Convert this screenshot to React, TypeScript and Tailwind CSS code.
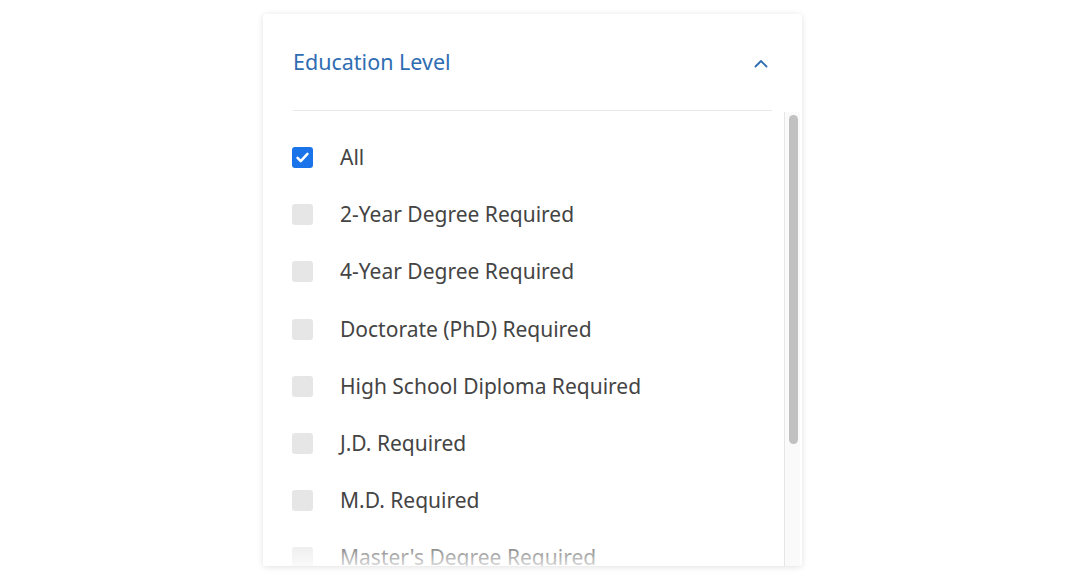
const options = [
  { label: 'All', checked: true },
  { label: '2-Year Degree Required', checked: false },
  { label: '4-Year Degree Required', checked: false },
  { label: 'Doctorate (PhD) Required', checked: false },
  { label: 'High School Diploma Required', checked: false },
  { label: 'J.D. Required', checked: false },
  { label: 'M.D. Required', checked: false },
  { label: "Master's Degree Required", checked: false },
];

function Checkbox({ checked }: { checked: boolean }) {
  if (checked) {
    return (
      <span className="flex h-[21px] w-[21px] shrink-0 items-center justify-center rounded-[3px] bg-[#1a73e8]">
        <svg width="17" height="17" viewBox="0 0 24 24" fill="none">
          <path d="M5 12.5l4.5 4.5L19 7" stroke="#fff" strokeWidth="3.6" strokeLinecap="round" strokeLinejoin="round" />
        </svg>
      </span>
    );
  }
  return <span className="h-[21px] w-[21px] shrink-0 rounded-[3px] bg-[#e6e6e6]" />;
}

export default function App() {
  return (
    <div className="min-h-screen bg-white pt-[14px] font-['Noto_Sans','Open_Sans',sans-serif]">
      <div className="ml-[263px] flex h-[552px] w-[539px] flex-col rounded-[3px] bg-white shadow-[0_1px_6px_rgba(0,0,0,0.12)]">
        {/* Header */}
        <div className="mx-[30px] flex h-[97px] shrink-0 items-center justify-between border-b border-[#e8e8e8]">
          <h2 className="text-[21.5px] font-normal text-[#2f6db3]">Education Level</h2>
          <svg width="14" height="9" viewBox="0 0 14 9" fill="none" className="mr-[4px] mt-[3px]">
            <path d="M1.5 7.5L7 2l5.5 5.5" stroke="#2f6db3" strokeWidth="1.8" strokeLinecap="round" strokeLinejoin="round" />
          </svg>
        </div>

        {/* List */}
        <div className="flex min-h-0 flex-1 pr-[2px]">
          <div className="relative min-h-0 flex-1 overflow-hidden">
            <ul className="pl-[29px] pt-[36px]">
              {options.map((o) => (
                <li key={o.label} className="flex h-[57.2px] items-start gap-[27px]">
                  <Checkbox checked={o.checked} />
                  <span className="-mt-[4px] text-[21px] leading-[28px] text-[#444]">{o.label}</span>
                </li>
              ))}
            </ul>
            <div className="pointer-events-none absolute inset-x-0 bottom-0 h-[34px] bg-gradient-to-b from-white/0 to-white/80" />
          </div>
          <div className="mt-[1px] w-[16px] shrink-0 border-l border-[#e6e6e6] bg-[#fafafa] px-[4px] pt-[3px]">
            <div className="h-[329px] w-[9px] rounded-full bg-[#c1c1c1]" />
          </div>
        </div>
      </div>
    </div>
  );
}
